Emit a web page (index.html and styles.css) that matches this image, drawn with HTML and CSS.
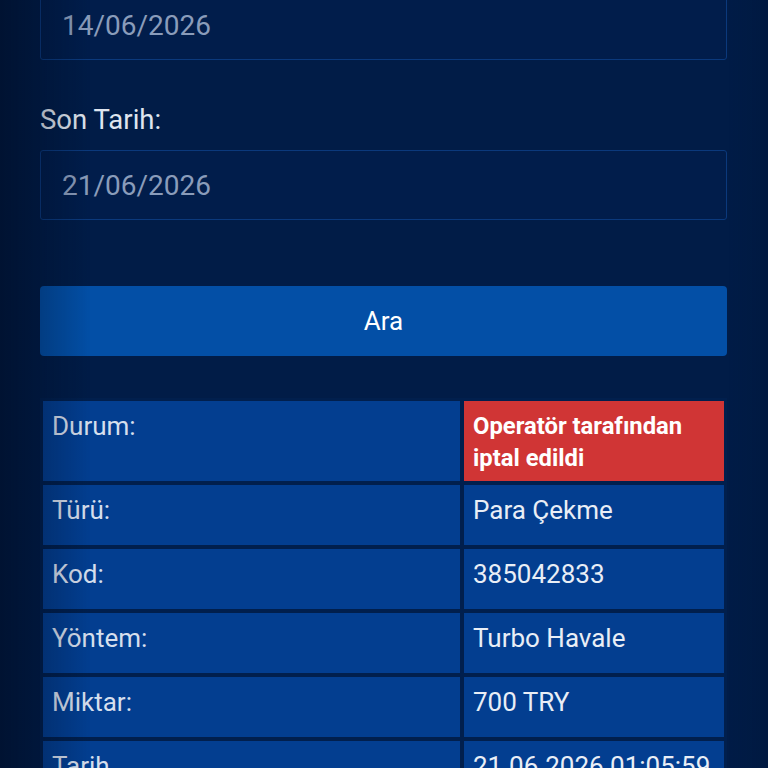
FILE: index.html
```html
<!DOCTYPE html>
<html lang="tr">
<head>
<meta charset="utf-8">
<title>İşlem Geçmişi</title>
<link rel="stylesheet" href="styles.css">
</head>
<body>
<div class="page">
  <div class="field field-first">
    <div class="input">14/06/2026</div>
  </div>
  <div class="field">
    <label class="label">Son Tarih:</label>
    <div class="input">21/06/2026</div>
  </div>
  <button class="btn">Ara</button>
  <div class="grid">
    <div class="cell key">Durum:</div>
    <div class="cell val status">Operatör tarafından iptal edildi</div>
    <div class="cell key">Türü:</div>
    <div class="cell val">Para Çekme</div>
    <div class="cell key">Kod:</div>
    <div class="cell val">385042833</div>
    <div class="cell key">Yöntem:</div>
    <div class="cell val">Turbo Havale</div>
    <div class="cell key">Miktar:</div>
    <div class="cell val">700 TRY</div>
    <div class="cell key">Tarih</div>
    <div class="cell val">21.06.2026 01:05:59</div>
  </div>
</div>
</body>
</html>
```
FILE: styles.css
```css
html, body {
  margin: 0;
  padding: 0;
}
body {
  background: #011c47;
  font-family: Roboto, "Liberation Sans", sans-serif;
  height: 768px;
  overflow: hidden;
  position: relative;
}
body::before {
  content: "";
  position: fixed;
  top: 0;
  bottom: 0;
  left: 0;
  width: 90px;
  background: linear-gradient(to right, rgba(0, 8, 25, 0.45), rgba(0, 8, 25, 0));
  pointer-events: none;
  z-index: 5;
}
body::after {
  content: "";
  position: fixed;
  top: 0;
  bottom: 0;
  right: 0;
  width: 40px;
  background: linear-gradient(to left, rgba(0, 8, 25, 0.12), rgba(0, 8, 25, 0));
  pointer-events: none;
  z-index: 5;
}
.page {
  width: 687px;
  margin: 0 0 0 40px;
  display: flex;
  flex-direction: column;
}
.field {
  display: flex;
  flex-direction: column;
}
.field-first {
  margin-top: -10px;
}
.label {
  margin-top: 44px;
  margin-bottom: 14px;
  font-size: 27.5px;
  line-height: 32px;
  color: #dfe5ef;
}
.input {
  box-sizing: border-box;
  height: 70px;
  border: 1px solid #0b397c;
  border-radius: 3px;
  background: #011d4b;
  padding: 0 21px;
  display: flex;
  align-items: center;
  font-size: 28px;
  color: #8a9cba;
}
.btn {
  margin-top: 66px;
  height: 70px;
  border: none;
  border-radius: 4px;
  background: #034fa6;
  color: #ffffff;
  font-family: Roboto, "Liberation Sans", sans-serif;
  font-size: 26px;
  padding: 0;
}
.grid {
  margin-top: 42px;
  padding: 3px;
  display: grid;
  grid-template-columns: 417px 260px;
  gap: 4px;
  background: #011f4d;
}
.cell {
  box-sizing: border-box;
  min-height: 60px;
  padding: 9px 9px 7px 9px;
  background: #033e90;
  font-size: 26px;
  line-height: 32px;
}
.key {
  color: #d6dfed;
}
.val {
  color: #e9eef6;
}
.status {
  background: #d03535;
  color: #ffffff;
  font-weight: 700;
  font-size: 23.8px;
  line-height: 32px;
}
```
